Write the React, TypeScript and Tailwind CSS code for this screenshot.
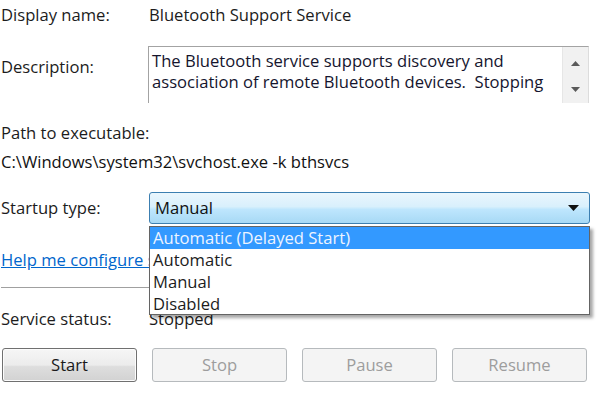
import React from "react";

function Btn({ label, disabled }: { label: string; disabled?: boolean }) {
  return disabled ? (
    <div className="w-[135px] h-[34px] rounded-[3px] border border-[#b6babd] bg-[#f4f4f4] flex items-center justify-center text-[#9d9d9d]">
      {label}
    </div>
  ) : (
    <div className="w-[135px] h-[34px] rounded-[3px] border border-[#707070] bg-[linear-gradient(to_bottom,#f6f6f6_0%,#ececec_50%,#dedede_55%,#d2d2d2_100%)] shadow-[inset_0_0_0_1px_#fcfcfc] flex items-center justify-center text-[#1a1a1a]">
      {label}
    </div>
  );
}

export default function App() {
  return (
    <div className="w-[600px] h-[400px] bg-white overflow-hidden text-[16.6px] leading-[20px] text-[#1c1c1c] font-['Open_Sans','Noto_Sans',sans-serif] flex flex-col pl-[1px]">
      {/* Display name */}
      <div className="flex items-center h-[30px]">
        <div className="w-[148px]">Display name:</div>
        <div>Bluetooth Support Service</div>
      </div>

      {/* Description */}
      <div className="flex mt-[16px] h-[57px]">
        <div className="w-[147px] pt-[11px]">Description:</div>
        <div className="w-[441px] h-[57px] border-t border-l border-r border-t-[#a3a3a3] border-l-[#a3a3a3] border-r-[#dcdcdc] flex">
          <div className="flex-1 pl-[3px] pt-[3px] leading-[21px] text-[#15152e] whitespace-pre overflow-hidden">
            <div>The Bluetooth service supports discovery and</div>
            <div>association of remote Bluetooth devices.  Stopping</div>
          </div>
          <div className="w-[26px] bg-[#f1f1f1] border-l border-[#e6e6e6] flex flex-col items-center pt-[14px] gap-[21px]">
            <svg width="9" height="5" viewBox="0 0 9 5">
              <path d="M0 5 L4.5 0 L9 5 Z" fill="#5a5a5a" />
            </svg>
            <svg width="9" height="5" viewBox="0 0 9 5">
              <path d="M0 0 L9 0 L4.5 5 Z" fill="#5a5a5a" />
            </svg>
          </div>
        </div>
      </div>

      {/* Path */}
      <div className="mt-[20px] h-[20px]">Path to executable:</div>
      <div className="mt-[9px] h-[20px] text-[#111]">C:\Windows\system32\svchost.exe -k bthsvcs</div>

      {/* Startup type */}
      <div className="flex mt-[20px] h-[32px] items-center">
        <div className="w-[148px]">Startup type:</div>
        <div className="relative z-10">
          <div className="w-[441px] h-[32px] rounded-[3px] border border-[#3c7fb1] bg-[linear-gradient(to_bottom,#eaf6fd_0%,#d9f0fc_45%,#bee6fd_55%,#a7d9f5_100%)] flex items-center pl-[5px] pr-[10px] text-[#111]">
            <div className="flex-1">Manual</div>
            <svg width="11" height="6" viewBox="0 0 11 6">
              <path d="M0 0 L11 0 L5.5 6 Z" fill="#111" />
            </svg>
          </div>
          <div className="absolute left-0 top-[34px] w-[441px] border border-[#646464] bg-white shadow-[3px_3px_3px_rgba(0,0,0,0.35)]">
            <div className="h-[22px] leading-[22px] bg-[#3399ff] text-[#eef4ff] pl-[3px]">Automatic (Delayed Start)</div>
            <div className="h-[22px] leading-[22px] pl-[3px]">Automatic</div>
            <div className="h-[22px] leading-[22px] pl-[3px]">Manual</div>
            <div className="h-[21px] leading-[21px] pl-[3px]">Disabled</div>
          </div>
        </div>
      </div>

      {/* Help link */}
      <div className="mt-[26px] h-[20px] text-[#0066cc] underline">Help me configure service recovery options.</div>

      {/* Separator */}
      <div className="mt-[17px] h-px w-[589px] bg-[#a0a0a0]" />

      {/* Service status */}
      <div className="flex mt-[21px] h-[20px] items-center">
        <div className="w-[148px]">Service status:</div>
        <div>Stopped</div>
      </div>

      {/* Buttons */}
      <div className="flex mt-[19px] gap-[15px] pl-[1px]">
        <Btn label="Start" />
        <Btn label="Stop" disabled />
        <Btn label="Pause" disabled />
        <Btn label="Resume" disabled />
      </div>
    </div>
  );
}
